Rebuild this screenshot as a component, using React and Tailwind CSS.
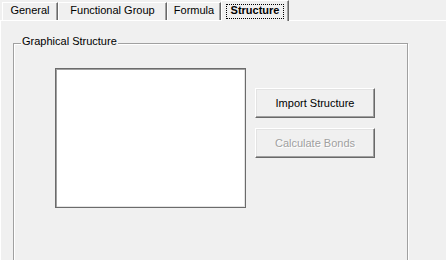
import React from 'react';

const tabs = [
  { label: 'General', width: 'w-[56px]' },
  { label: 'Functional Group', width: 'w-[109px]' },
  { label: 'Formula', width: 'w-[54px]' },
];

const Tab = ({ label, width }) => (
  <div
    className={`${width} h-[18px] flex justify-center pt-[1px] border-l border-t border-r border-l-white border-t-white border-r-[#696969] shadow-[inset_-1px_0_0_#a0a0a0] leading-[13px]`}
  >
    {label}
  </div>
);

const WinButton = ({ children, disabled }) => (
  <button
    disabled={disabled}
    className={`w-[120px] h-[30px] flex items-center justify-center bg-[#f0f0f0] border border-t-white border-l-white border-r-[#696969] border-b-[#696969] shadow-[inset_-1px_-1px_0_#a0a0a0,inset_1px_1px_0_#e3e3e3] leading-[13px] ${
      disabled ? 'text-[#a0a0a0] [text-shadow:1px_1px_0_#ffffff]' : 'text-black'
    }`}
  >
    {children}
  </button>
);

export default function App() {
  return (
    <div className="w-[446px] h-[260px] bg-[#f0f0f0] overflow-hidden text-[11px] text-black font-['Liberation_Sans',Arial,sans-serif]">
      {/* tab strip */}
      <div className="h-[20px] flex items-end pl-[2px]">
        {tabs.map((t) => (
          <Tab key={t.label} {...t} />
        ))}
        <div className="relative z-10 w-[68px] h-[21px] -mb-[1px] bg-[#f0f0f0] flex justify-center pt-[3px] border-l border-t border-r border-l-white border-t-white border-r-[#696969] shadow-[inset_-1px_0_0_#a0a0a0]">
          <div className="h-[15px] px-[4px] pb-[2px] border border-dotted border-black font-bold leading-[11px]">
            Structure
          </div>
        </div>
      </div>

      {/* tab page */}
      <div className="h-[240px] border-t border-l border-white pl-[12px] pt-[22px]">
        <div className="relative w-[395px] h-[230px] border border-[#a0a0a0] shadow-[inset_1px_1px_0_#ffffff,1px_1px_0_#ffffff]">
          <span className="absolute left-[7px] -top-[9px] px-[1px] bg-[#f0f0f0] leading-[13px]">
            Graphical Structure
          </span>
          <div className="flex pl-[41px] pt-[24px]">
            <div className="w-[191px] h-[140px] bg-white border border-[#6b6b6b] shadow-[inset_1px_1px_0_#a0a0a0,inset_-1px_-1px_0_#e3e3e3]" />
            <div className="ml-[9px] mt-[20px] flex flex-col gap-[10px]">
              <WinButton>Import Structure</WinButton>
              <WinButton disabled>Calculate Bonds</WinButton>
            </div>
          </div>
        </div>
      </div>
    </div>
  );
}
